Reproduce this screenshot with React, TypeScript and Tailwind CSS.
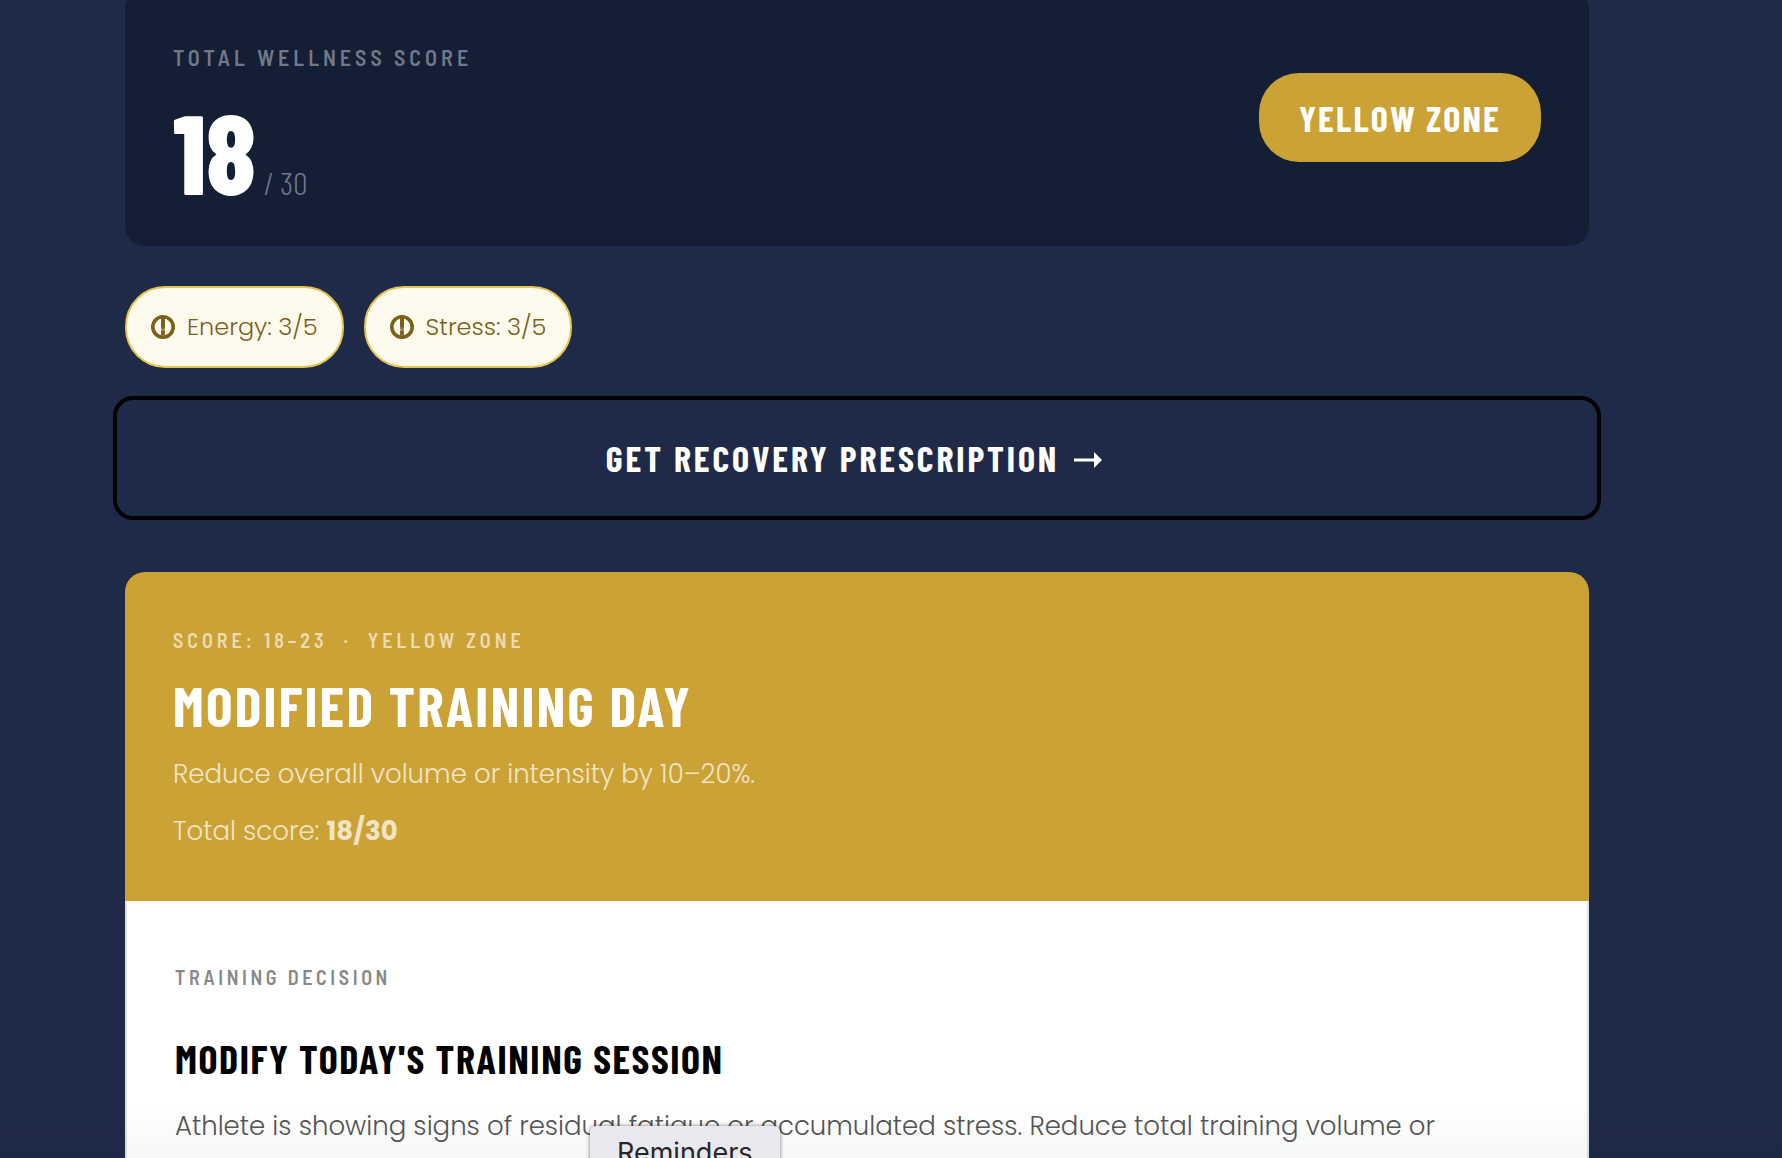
const chips = ["Energy: 3/5", "Stress: 3/5"];

function AlertIcon() {
  return (
    <svg viewBox="0 0 24 24" className="size-6 shrink-0" fill="none" aria-hidden="true">
      <circle cx="12" cy="12" r="10.2" stroke="#7a6018" strokeWidth="3.6" />
      <path d="M10 3h4v7.5l-.5 4.2h-3L10 10.500zM10.100 15.2h3.8v5.300h-3.800z" fill="#7a6018" />
    </svg>
  );
}

function ArrowIcon() {
  return (
    <svg viewBox="0 -4 28 20" className="h-5 w-7 shrink-0" fill="currentColor" aria-hidden="true">
      <path d="M0 6.5h20V0l8 8-8 8V9.5H0z" />
    </svg>
  );
}

export default function App() {
  return (
    <div className="relative h-screen overflow-hidden bg-[#1f2a48] pl-[125px] pr-[193px] font-['Poppins',sans-serif] font-light">
      <main>
        <section className="-mt-[11px] flex items-center justify-between rounded-[20px] bg-[#141e35] px-12 pt-10 pb-10">
          <div className="pt-2">
            <h2 className="font-['Barlow_Semi_Condensed',sans-serif] text-[22px] leading-[40px] font-semibold tracking-[4px] text-[#727888]">
              TOTAL WELLNESS SCORE
            </h2>
            <p className="mt-[17px] font-['Barlow_Condensed',sans-serif] text-[112px] leading-[112px] font-extrabold text-white">
              18
              <span className="ml-2 text-[32px] leading-[32px] font-light text-[#727888]">/ 30</span>
            </p>
          </div>
          <span className="rounded-[40px] bg-[#cba236] px-10 py-5 font-['Barlow_Condensed',sans-serif] text-[36px] leading-[49px] font-bold tracking-[0.06em] text-white">
            YELLOW ZONE
          </span>
        </section>

        <ul className="mt-10 flex gap-5">
          {chips.map((chip) => (
            <li
              key={chip}
              className="flex items-center gap-3 rounded-[40px] border-2 border-[#e5c44f] bg-[#fffaee] px-6 py-5 text-[24px] leading-[38px] text-[#7a6018]"
            >
              <AlertIcon />
              {chip}
            </li>
          ))}
        </ul>

        <div className="-mx-3 mt-7">
          <button
            type="button"
            className="flex h-[124px] w-full items-center justify-center gap-[15px] rounded-[20px] border-4 border-black pr-3 pl-1.5 font-['Barlow_Condensed',sans-serif] text-[36px] font-bold tracking-[0.08em] text-white"
          >
            GET RECOVERY PRESCRIPTION
            <ArrowIcon />
          </button>
        </div>

        <article className="mt-[52px]">
          <header className="rounded-t-[20px] bg-[#cba236] px-12 pt-12 pb-[45px] text-white">
            <p className="font-['Barlow_Semi_Condensed',sans-serif] text-[20px] leading-[40px] font-semibold tracking-[4px] whitespace-pre text-[#eddcb2]">
              {"SCORE: 18–23  ·  YELLOW ZONE"}
            </p>
            <h1 className="mt-4 font-['Barlow_Condensed',sans-serif] text-[56px] leading-[58px] font-bold tracking-[0.04em]">
              MODIFIED TRAINING DAY
            </h1>
            <p className="mt-4 text-[26px] leading-[49px] text-[#f1e4c5]">
              Reduce overall volume or intensity by 10–20%.
            </p>
            <p className="mt-2 text-[26px] leading-[49px] text-[#f1e4c5]">
              Total score: <strong className="font-bold">18/30</strong>
            </p>
          </header>
          <div className="h-96 border-x-2 border-[#dde1ec] bg-white px-12 pt-14">
            <h3 className="font-['Barlow_Semi_Condensed',sans-serif] text-[20px] leading-[40px] font-semibold tracking-[0.18em] text-[#888888]">
              TRAINING DECISION
            </h3>
            <h2 className="mt-[37px] font-['Barlow_Condensed',sans-serif] text-[40px] leading-[48px] font-bold tracking-[0.04em] text-black">
              MODIFY TODAY'S TRAINING SESSION
            </h2>
            <p className="mt-5 text-[26px] leading-[48px] text-[#555555]">
              Athlete is showing signs of residual fatigue or accumulated stress. Reduce total training volume or
            </p>
          </div>
        </article>
      </main>

      <div className="absolute inset-x-0 bottom-0 h-14 bg-linear-to-b from-black/0 to-black/3" />
      <div
        role="tooltip"
        className="absolute top-[1126px] left-[590px] rounded-md bg-[#e9e8ee] px-[27px] py-1 font-['Inter',sans-serif] text-[27px] leading-[46px] font-normal text-[#262626] shadow-[0_0_4px_rgba(0,0,0,0.5)]"
      >
        Reminders
      </div>
    </div>
  );
}
